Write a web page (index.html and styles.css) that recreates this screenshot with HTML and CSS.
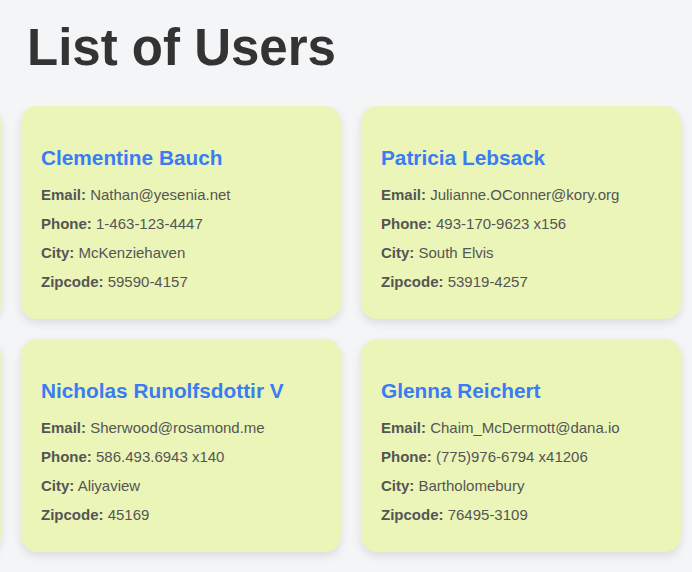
FILE: index.html
```html
<!DOCTYPE html>
<html lang="en">
<head>
<meta charset="utf-8">
<title>List of Users</title>
<link rel="stylesheet" href="styles.css">
</head>
<body>
<h1 class="title">List of Users</h1>
<div class="strip">
  <div class="grid">
    <div class="card card-offscreen"></div>
    <div class="card">
      <h2 class="name">Clementine Bauch</h2>
      <p class="field"><b>Email:</b> Nathan@yesenia.net</p>
      <p class="field"><b>Phone:</b> 1-463-123-4447</p>
      <p class="field"><b>City:</b> McKenziehaven</p>
      <p class="field"><b>Zipcode:</b> 59590-4157</p>
    </div>
    <div class="card">
      <h2 class="name">Patricia Lebsack</h2>
      <p class="field"><b>Email:</b> Julianne.OConner@kory.org</p>
      <p class="field"><b>Phone:</b> 493-170-9623 x156</p>
      <p class="field"><b>City:</b> South Elvis</p>
      <p class="field"><b>Zipcode:</b> 53919-4257</p>
    </div>
    <div class="card card-offscreen"></div>
    <div class="card">
      <h2 class="name">Nicholas Runolfsdottir V</h2>
      <p class="field"><b>Email:</b> Sherwood@rosamond.me</p>
      <p class="field"><b>Phone:</b> 586.493.6943 x140</p>
      <p class="field"><b>City:</b> Aliyaview</p>
      <p class="field"><b>Zipcode:</b> 45169</p>
    </div>
    <div class="card">
      <h2 class="name">Glenna Reichert</h2>
      <p class="field"><b>Email:</b> Chaim_McDermott@dana.io</p>
      <p class="field"><b>Phone:</b> (775)976-6794 x41206</p>
      <p class="field"><b>City:</b> Bartholomebury</p>
      <p class="field"><b>Zipcode:</b> 76495-3109</p>
    </div>
  </div>
</div>
</body>
</html>
```

FILE: styles.css
```css
html, body {
  margin: 0;
  padding: 0;
  background: #f4f5f7;
  font-family: "Liberation Sans", Arial, Helvetica, sans-serif;
  color: #555;
}

.title {
  margin: 18px 0 29px 27px;
  font-size: 51px;
  line-height: 59px;
  font-weight: bold;
  color: #333;
}

.strip {
  overflow: hidden;
  padding-bottom: 30px;
}

.grid {
  display: grid;
  grid-template-columns: repeat(3, 320px);
  gap: 20px;
  margin-left: -319px;
}

.card {
  background: #eaf5b7;
  border-radius: 16px;
  padding: 24px 20px 18px;
  box-shadow: 0 4px 10px rgba(0, 0, 0, 0.1);
}

.card-offscreen {
  min-height: 171px;
}

.name {
  margin: 16px 0 14px;
  font-size: 20.8px;
  line-height: 24px;
  font-weight: bold;
  color: #3b7bf4;
}

.field {
  margin: 8px 0;
  font-size: 15px;
  line-height: 21px;
  color: #555;
}

.field:last-child {
  margin-bottom: 9px;
}

.field b {
  font-weight: bold;
}
```
